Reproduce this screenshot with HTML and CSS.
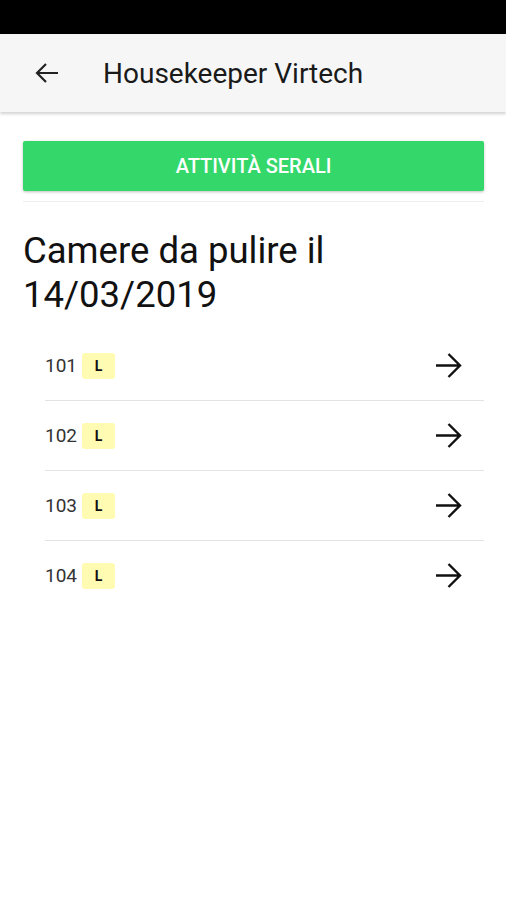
FILE: index.html
```html
<!DOCTYPE html>
<html>
<head>
<meta charset="utf-8">
<title>Housekeeper Virtech</title>
<link rel="stylesheet" href="styles.css">
</head>
<body>

<div id="statusbar"></div>

<div id="appbar">
  <svg class="backicon" width="24" height="22" viewBox="0 0 24 22">
    <path d="M23 11 H2 M11 2 L2 11 L11 20" fill="none" stroke="#222" stroke-width="2.2"/>
  </svg>
  <span class="apptitle">Housekeeper Virtech</span>
</div>

<div id="content">
  <div class="serali">ATTIVITÀ SERALI</div>
  <div class="sep"></div>

  <h1 class="daytitle">Camere da pulire il 14/03/2019</h1>

  <ul class="roomlist">
    <li><span class="roomno">101</span><span class="badge">L</span>
      <svg class="goicon" width="27" height="25" viewBox="0 0 27 25"><path d="M1 12.5 H25 M13.5 1 L25 12.5 L13.5 24" fill="none" stroke="#111" stroke-width="2.4"/></svg></li>
    <li><span class="roomno">102</span><span class="badge">L</span>
      <svg class="goicon" width="27" height="25" viewBox="0 0 27 25"><path d="M1 12.5 H25 M13.5 1 L25 12.5 L13.5 24" fill="none" stroke="#111" stroke-width="2.4"/></svg></li>
    <li><span class="roomno">103</span><span class="badge">L</span>
      <svg class="goicon" width="27" height="25" viewBox="0 0 27 25"><path d="M1 12.5 H25 M13.5 1 L25 12.5 L13.5 24" fill="none" stroke="#111" stroke-width="2.4"/></svg></li>
    <li><span class="roomno">104</span><span class="badge">L</span>
      <svg class="goicon" width="27" height="25" viewBox="0 0 27 25"><path d="M1 12.5 H25 M13.5 1 L25 12.5 L13.5 24" fill="none" stroke="#111" stroke-width="2.4"/></svg></li>
  </ul>
</div>

</body>
</html>
```

FILE: styles.css
```css
body { margin: 0; background: white; font-family: Roboto, "Liberation Sans", sans-serif; color: #111; }

#statusbar { height: 34px; background: black; }

#appbar { height: 78px; background: #f6f6f6; display: flex; align-items: center; box-shadow: 0 2px 3px rgba(0,0,0,0.18); position: relative; }
#appbar .backicon { margin-left: 35px; margin-right: 44px; }
#appbar .apptitle { font-size: 28px; color: #1a1a1a; }

#content { padding: 29px 22px 0 23px; }

.serali { height: 50px; background: #34d86a; color: white; border-radius: 2px; font-size: 20px; font-weight: 500; display: flex; align-items: center; justify-content: center; box-shadow: 0 1px 3px rgba(0,0,0,0.25); }
.sep { margin-top: 10px; border-top: 1px solid #eee; }

h1.daytitle { margin: 27px 0 0 0; font-size: 36.5px; font-weight: 400; line-height: 44px; width: 350px; }

ul.roomlist { list-style-type: none; margin: 14px 0 0 22px; padding: 0; }
ul.roomlist li { height: 69px; display: flex; align-items: center; border-bottom: 1px solid #e3e3e3; }
ul.roomlist li:last-child { border-bottom: none; }
.roomno { font-size: 19px; color: #333; width: 37px; }
.badge { width: 33px; height: 26px; background: #fffbb3; border-radius: 3px; font-size: 14px; font-weight: bold; display: flex; align-items: center; justify-content: center; }
.goicon { margin-left: auto; margin-right: 22px; }
```
